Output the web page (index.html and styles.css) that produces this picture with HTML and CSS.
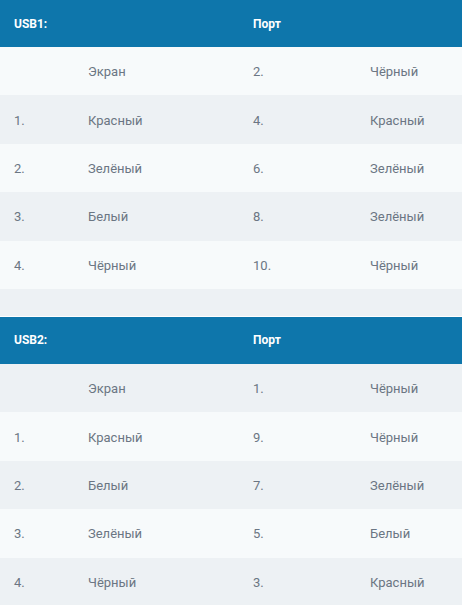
FILE: index.html
```html
<!DOCTYPE html>
<html lang="ru">
<head>
<meta charset="utf-8">
<link rel="stylesheet" href="styles.css">
</head>
<body>
<div class="page">
  <table class="pins">
    <colgroup><col class="c1"><col class="c2"><col class="c3"><col class="c4"></colgroup>
    <thead>
      <tr><th colspan="2">USB1:</th><th colspan="2">Порт</th></tr>
    </thead>
    <tbody>
      <tr class="light"><td></td><td>Экран</td><td>2.</td><td>Чёрный</td></tr>
      <tr class="dark"><td>1.</td><td>Красный</td><td>4.</td><td>Красный</td></tr>
      <tr class="light"><td>2.</td><td>Зелёный</td><td>6.</td><td>Зелёный</td></tr>
      <tr class="dark"><td>3.</td><td>Белый</td><td>8.</td><td>Зелёный</td></tr>
      <tr class="light"><td>4.</td><td>Чёрный</td><td>10.</td><td>Чёрный</td></tr>
    </tbody>
  </table>
  <div class="spacer"></div>
  <table class="pins">
    <colgroup><col class="c1"><col class="c2"><col class="c3"><col class="c4"></colgroup>
    <thead>
      <tr><th colspan="2">USB2:</th><th colspan="2">Порт</th></tr>
    </thead>
    <tbody>
      <tr class="dark"><td></td><td>Экран</td><td>1.</td><td>Чёрный</td></tr>
      <tr class="light"><td>1.</td><td>Красный</td><td>9.</td><td>Чёрный</td></tr>
      <tr class="dark"><td>2.</td><td>Белый</td><td>7.</td><td>Зелёный</td></tr>
      <tr class="light"><td>3.</td><td>Зелёный</td><td>5.</td><td>Белый</td></tr>
      <tr class="dark"><td>4.</td><td>Чёрный</td><td>3.</td><td>Красный</td></tr>
    </tbody>
  </table>
</div>
</body>
</html>
```
FILE: styles.css
```css
html, body {
  margin: 0;
  padding: 0;
  background: #ffffff;
}
body {
  font-family: Roboto, "Liberation Sans", sans-serif;
}
.page {
  width: 462px;
}
.pins {
  width: 462px;
  border-collapse: collapse;
  table-layout: fixed;
}
.c1 { width: 74px; }
.c2 { width: 165px; }
.c3 { width: 117px; }
.c4 { width: 106px; }
.pins th {
  background: #0e76ab;
  color: #ffffff;
  font-size: 12px;
  font-weight: 700;
  text-align: left;
  height: 47px;
  padding: 0 0 0 14px;
  box-sizing: border-box;
}
.pins td {
  height: 48.4px;
  padding: 1px 0 0 14px;
  font-size: 13px;
  color: #6b7683;
  box-sizing: border-box;
  vertical-align: middle;
}
.light { background: #f7fafb; }
.dark { background: #edf1f4; }
.spacer {
  height: 27px;
  background: #edf1f4;
  border-bottom: 1px solid #ffffff;
}
```
